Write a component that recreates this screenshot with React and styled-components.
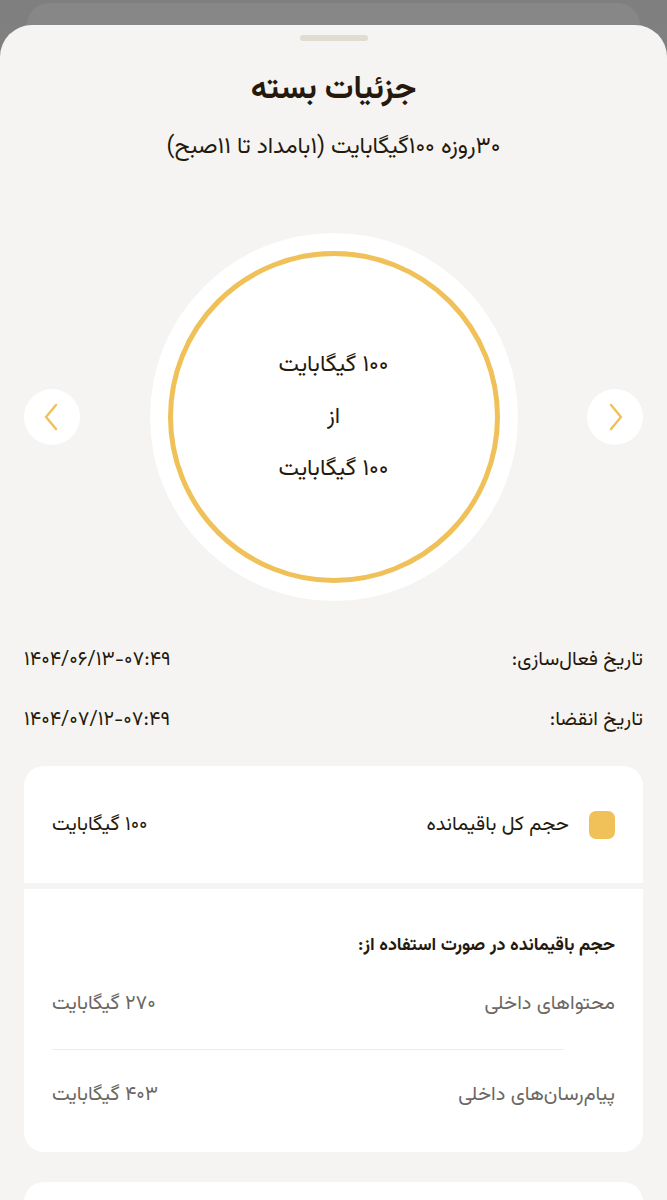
import React from 'react';
import styled, { createGlobalStyle } from 'styled-components';

const GlobalStyle = createGlobalStyle`
    html, body {
        margin: 0;
        padding: 0;
        background: #808080;
    }
    body {
        font-family: "Vazirmatn", "DejaVu Sans", "Noto Sans", sans-serif;
        color: #24190c;
    }
`;

const Backdrop = styled.div`
    height: 25px;
    background: #7f7f7f;
    display: flex;
    justify-content: center;
    align-items: flex-end;
`;

const DimCard = styled.div`
    width: 613px;
    height: 22px;
    background: #878787;
    border-radius: 26px 26px 0 0;
`;

const Sheet = styled.div`
    direction: rtl;
    background: #f5f4f2;
    border-radius: 32px 32px 0 0;
    min-height: 1175px;
    padding: 10px 24px 0 24px;
    box-sizing: border-box;
    display: flex;
    flex-direction: column;
    align-items: stretch;
`;

const Handle = styled.div`
    align-self: center;
    width: 68px;
    height: 6px;
    border-radius: 4px;
    background: #e0dcd2;
`;

const Title = styled.h1`
    margin: 27px 0 0 0;
    text-align: center;
    font-size: 32px;
    line-height: 44px;
    font-weight: 700;
    color: #24190c;
`;

const Subtitle = styled.div`
    margin-top: 19px;
    text-align: center;
    font-size: 23px;
    line-height: 32px;
    color: #24190c;
`;

const Carousel = styled.div`
    margin-top: 70px;
    display: flex;
    align-items: center;
    justify-content: space-between;
`;

const ArrowButton = styled.div`
    width: 56px;
    height: 56px;
    border-radius: 50%;
    background: #ffffff;
    display: flex;
    align-items: center;
    justify-content: center;
`;

const Circle = styled.div`
    width: 368px;
    height: 368px;
    border-radius: 50%;
    background: #ffffff;
    display: flex;
    align-items: center;
    justify-content: center;
`;

const Ring = styled.div`
    width: 332px;
    height: 332px;
    border-radius: 50%;
    border: 5px solid #efc158;
    box-sizing: border-box;
    display: flex;
    flex-direction: column;
    align-items: center;
    justify-content: center;
    gap: 20px;
`;

const RingText = styled.div`
    font-size: 23px;
    line-height: 32px;
    color: #24190c;
`;

const DateList = styled.div`
    margin-top: 44px;
    display: flex;
    flex-direction: column;
    gap: 30px;
`;

const DateRow = styled.div`
    display: flex;
    justify-content: space-between;
    align-items: center;
    font-size: 20px;
    line-height: 30px;
    color: #24190c;
`;

const DateValue = styled.span`
    direction: ltr;
    font-size: 20px;
`;

const Card = styled.div`
    margin-top: 31px;
    border-radius: 20px;
    overflow: hidden;
    display: flex;
    flex-direction: column;
    gap: 6px;
    background: #f5f4f2;
`;

const Section = styled.div`
    background: #ffffff;
    padding: ${p => p.$pad};
`;

const TotalRow = styled.div`
    display: flex;
    align-items: center;
    height: 117px;
    padding: 0 28px;
    box-sizing: border-box;
`;

const Swatch = styled.div`
    width: 26px;
    height: 28px;
    border-radius: 7px;
    background: #efc158;
    margin-left: 20px;
`;

const TotalLabel = styled.div`
    flex: 1;
    font-size: 20px;
    line-height: 30px;
    color: #24190c;
`;

const TotalValue = styled.div`
    font-size: 20px;
    line-height: 30px;
    color: #24190c;
`;

const SectionHeading = styled.div`
    font-size: 18px;
    line-height: 26px;
    font-weight: 700;
    color: #24190c;
`;

const UsageRow = styled.div`
    display: flex;
    justify-content: space-between;
    align-items: center;
    height: 90px;
    font-size: 20px;
    color: #6b6762;
`;

const Divider = styled.div`
    height: 1px;
    background: #efedea;
    margin-right: 51px;
`;

const NextCard = styled.div`
    margin-top: 30px;
    height: 40px;
    background: #ffffff;
    border-radius: 20px 20px 0 0;
`;

const Chevron = ({ dir }) => (
    <svg width="22" height="30" viewBox="0 0 22 30" fill="none">
        <path
            d={dir === 'left' ? 'M15 3 L5 15 L15 27' : 'M7 3 L17 15 L7 27'}
            stroke="#efc158"
            strokeWidth="2.4"
            strokeLinecap="round"
            strokeLinejoin="round"
        />
    </svg>
);

export default function App() {
    return (
        <>
            <GlobalStyle />
            <Backdrop>
                <DimCard />
            </Backdrop>
            <Sheet>
                <Handle />
                <Title>جزئیات بسته</Title>
                <Subtitle>۳۰روزه ۱۰۰گیگابایت (۱بامداد تا ۱۱صبح)</Subtitle>

                <Carousel>
                    <ArrowButton><Chevron dir="right" /></ArrowButton>
                    <Circle>
                        <Ring>
                            <RingText>۱۰۰ گیگابایت</RingText>
                            <RingText>از</RingText>
                            <RingText>۱۰۰ گیگابایت</RingText>
                        </Ring>
                    </Circle>
                    <ArrowButton><Chevron dir="left" /></ArrowButton>
                </Carousel>

                <DateList>
                    <DateRow>
                        <span>تاریخ فعال‌سازی:</span>
                        <DateValue>۱۴۰۴/۰۶/۱۳-۰۷:۴۹</DateValue>
                    </DateRow>
                    <DateRow>
                        <span>تاریخ انقضا:</span>
                        <DateValue>۱۴۰۴/۰۷/۱۲-۰۷:۴۹</DateValue>
                    </DateRow>
                </DateList>

                <Card>
                    <Section $pad="0">
                        <TotalRow>
                            <Swatch />
                            <TotalLabel>حجم کل باقیمانده</TotalLabel>
                            <TotalValue>۱۰۰ گیگابایت</TotalValue>
                        </TotalRow>
                    </Section>
                    <Section $pad="44px 28px 12px 28px">
                        <SectionHeading>حجم باقیمانده در صورت استفاده از:</SectionHeading>
                        <UsageRow>
                            <span>محتواهای داخلی</span>
                            <span>۲۷۰ گیگابایت</span>
                        </UsageRow>
                        <Divider />
                        <UsageRow>
                            <span>پیام‌رسان‌های داخلی</span>
                            <span>۴۰۳ گیگابایت</span>
                        </UsageRow>
                    </Section>
                </Card>
                <NextCard />
            </Sheet>
        </>
    );
}
